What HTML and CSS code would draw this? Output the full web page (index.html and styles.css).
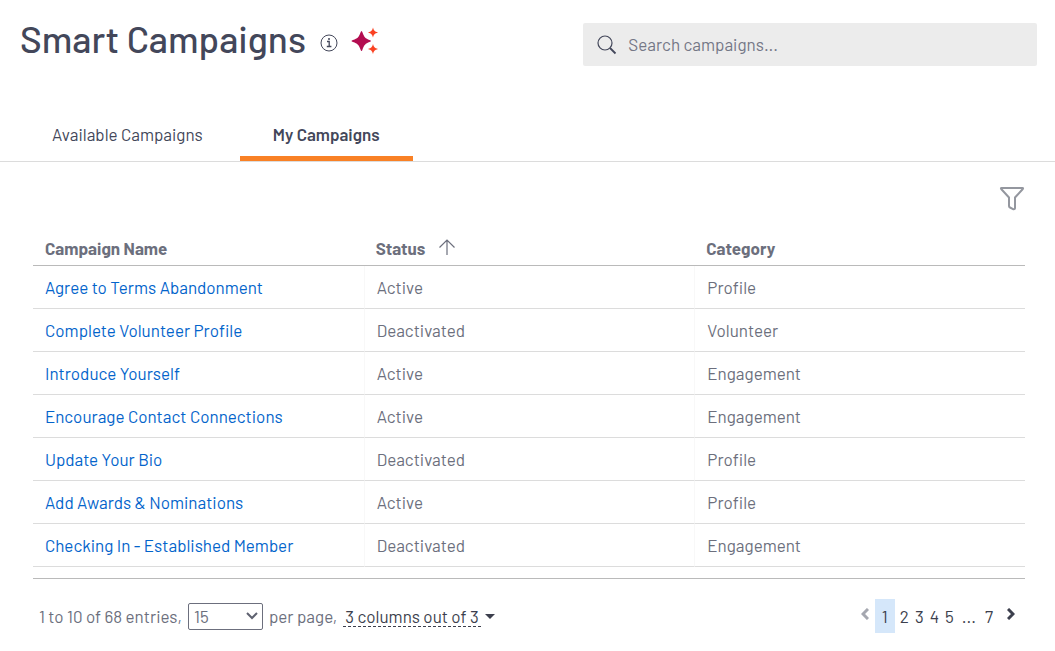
FILE: index.html
```html
<!DOCTYPE html>
<html lang="en">
<head>
  <meta charset="UTF-8">
  <title>Smart Campaigns</title>
  <link rel="stylesheet" href="styles.css">
</head>
<body>

  <header class="page-header">
    <div class="title">
      <h1>Smart Campaigns</h1>
      <button class="icon-button info" aria-label="About Smart Campaigns">
        <svg width="18" height="18" viewBox="0 0 18 18" fill="none" stroke="#43475a">
          <circle cx="9" cy="9" r="8"/>
          <path d="M7 7.5h2.2v5M6.800 12.500h4.600" stroke-width="1.3"/>
          <circle cx="9" cy="5" r="1" fill="#43475a" stroke="none"/>
        </svg>
      </button>
      <svg class="sparkle" width="28" height="28" viewBox="0 0 28 28">
        <path fill="#b30d50" d="M10.500 4Q11 4 11.500 5.500C13 10 14.500 11.500 18.500 13Q20 13.500 20 14T18.500 15C14.500 16.500 13 18 11.500 22.500Q11 24 10.500 24T9.500 22.500C8 18 6.500 16.500 2 15Q.5 14.500 .5 14T2 13C6.500 11.500 8 10 9.500 5.500Q10 4 10.500 4Z"/>
        <path fill="#fa4222" d="M22 .5C22.800 3.500 23.500 4.300 27 5.500C23.500 6.700 22.800 7.500 22 10.500C21.200 7.500 20.500 6.700 17 5.500C20.500 4.300 21.200 3.500 22 .5ZM22 17C22.800 20 23.500 20.800 27 22C23.500 23.200 22.800 24 22 27C21.200 24 20.500 23.200 17 22C20.500 20.800 21.200 20 22 17Z"/>
      </svg>
    </div>
    <form class="search" role="search">
      <svg width="20" height="20" viewBox="0 0 20 20" fill="none" stroke="#43475a" stroke-width="1.2">
        <circle cx="8" cy="8" r="7"/>
        <path d="M13 13l5.500 5.500" stroke-width="1.800"/>
      </svg>
      <input type="text" aria-label="Search campaigns" placeholder="Search campaigns...">
    </form>
  </header>

  <nav class="tabs">
    <a href="#available">Available Campaigns</a>
    <a href="#mine" class="active">My Campaigns</a>
  </nav>

  <main class="content">
    <div class="toolbar">
      <button class="icon-button" aria-label="Filter">
        <svg width="26" height="26" viewBox="0 0 26 26" fill="none" stroke="#94979f" stroke-width="2" stroke-linejoin="round">
          <path d="M2.500 2h21q1 0 .3 1L16 11.500v10.500q0 1.500-1.500 1.300L11 21.500q-1-.5-1-1.500v-8.500L2.200 3q-.7-1 .3-1z"/>
        </svg>
      </button>
    </div>

    <table class="campaigns">
      <thead>
        <tr>
          <th>Campaign Name</th>
          <th aria-sort="ascending">Status
            <svg class="sort" width="16" height="16" viewBox="0 0 16 16" fill="none" stroke="#6c6f7d" stroke-width="1.2">
              <path d="M8 16V1M.5 8.500L8 1l7.500 7.500"/>
            </svg>
          </th>
          <th>Category</th>
        </tr>
      </thead>
      <tbody>
        <tr><td><a href="#">Agree to Terms Abandonment</a></td><td>Active</td><td>Profile</td></tr>
        <tr><td><a href="#">Complete Volunteer Profile</a></td><td>Deactivated</td><td>Volunteer</td></tr>
        <tr><td><a href="#">Introduce Yourself</a></td><td>Active</td><td>Engagement</td></tr>
        <tr><td><a href="#">Encourage Contact Connections</a></td><td>Active</td><td>Engagement</td></tr>
        <tr><td><a href="#">Update Your Bio</a></td><td>Deactivated</td><td>Profile</td></tr>
        <tr><td><a href="#">Add Awards &amp; Nominations</a></td><td>Active</td><td>Profile</td></tr>
        <tr><td><a href="#">Checking In - Established Member</a></td><td>Deactivated</td><td>Engagement</td></tr>
      </tbody>
    </table>

    <!-- Paging -->
    <footer class="table-footer">
      <div class="entries">
        <span>1 to 10 of 68 entries,</span>
        <span class="select">
          <select id="perPage">
            <option>15</option>
            <option>25</option>
            <option>50</option>
          </select>
          <svg width="12" height="8" viewBox="0 0 12 8" fill="none" stroke="#5f6270" stroke-width="2">
            <path d="M1 1l5 5 5-5"/>
          </svg>
        </span>
        <label for="perPage">per page,</label>
        <button class="columns"><span>3 columns out of 3</span></button>
      </div>
      <nav class="pages" aria-label="Pages">
        <button class="arrow" aria-label="Previous page" disabled>
          <svg width="8" height="12" viewBox="0 0 8 12" fill="none" stroke="#a5a7b0" stroke-width="3"><path d="M7 1L2 6l5 5"/></svg>
        </button>
        <a href="#" class="current" aria-current="page">1</a>
        <a href="#">2</a>
        <a href="#">3</a>
        <a href="#">4</a>
        <a href="#">5</a>
        <span class="more">...</span>
        <a href="#">7</a>
        <button class="arrow next" aria-label="Next page">
          <svg width="8" height="12" viewBox="0 0 8 12" fill="none" stroke="#3c3f4d" stroke-width="3"><path d="M1 1l5 5-5 5"/></svg>
        </button>
      </nav>
    </footer>
  </main>

</body>
</html>
```
FILE: styles.css
```css
* {
  box-sizing: border-box;
}

body {
  margin: 0;
  background: #fff;
  color: #6c6f7d;
  font-family: Barlow, Roboto, sans-serif;
  font-size: 17px;
  line-height: 20px;
}

a {
  color: inherit;
  text-decoration: none;
}

button, input, select {
  font: inherit;
  color: inherit;
}

button {
  padding: 0;
  border: 0;
  background: none;
  cursor: pointer;
}

svg {
  display: block;
  flex: none;
}

.page-header {
  display: flex;
  justify-content: space-between;
  align-items: flex-start;
  padding: 14px 18px 0 20px;
}

.title {
  display: flex;
  align-items: center;
}

h1 {
  margin: 0;
  color: #43475a;
  font-size: 37px;
  font-weight: 500;
  line-height: 48px;
}

.info {
  margin: 10px 13px 0 14px;
}

.sparkle {
  margin-top: 6px;
}

.search {
  display: flex;
  align-items: center;
  gap: 11px;
  width: 43vw;
  height: 43px;
  margin-top: 9px;
  padding: 0 14px;
  border-radius: 2px;
  background: #ececec;
}

.search input {
  flex: 1;
  min-width: 0;
  padding: 0 0 1px;
  border: 0;
  outline: 0;
  background: none;
}

.search input::placeholder {
  color: #747786;
  opacity: 1;
}

.tabs {
  display: flex;
  gap: 4px;
  margin-top: 42px;
  padding-left: 19px;
  border-bottom: 1px solid #dcdcdc;
  color: #43475a;
}

.tabs a {
  padding: 16px 33px 12px;
  border-bottom: 5px solid transparent;
}

.tabs a.active {
  border-bottom-color: #f98125;
  font-weight: 600;
}

.content {
  padding: 0 30px 0 33px;
}

.toolbar {
  display: flex;
  justify-content: flex-end;
  padding-top: 24px;
}

.campaigns {
  width: 100%;
  margin-top: 20px;
  padding-bottom: 11px;
  border-bottom: 1px solid #bababa;
  border-spacing: 0;
  table-layout: fixed;
}

.campaigns th {
  height: 34px;
  padding: 0 12px 2px;
  border-bottom: 1px solid #bababa;
  font-weight: 700;
  text-align: left;
}

.campaigns td {
  height: 43px;
  padding: 0 12px;
  border-bottom: 1px solid #dcdcdc;
}

.campaigns td + td {
  border-left: 1px solid #f8f8f8;
}

.campaigns td a {
  color: #0364cb;
}

.sort {
  display: inline-block;
  margin-left: 10px;
}

.table-footer {
  display: flex;
  justify-content: space-between;
  align-items: center;
  padding: 20px 9px 0 6px;
}

.entries {
  display: flex;
  align-items: center;
  gap: 6px;
}

.select {
  display: grid;
  align-items: center;
}

.select select, .select svg {
  grid-area: 1 / 1;
}

.select select {
  width: 75px;
  height: 27px;
  padding: 0 5px;
  border: 1px solid #6c6f7d;
  border-radius: 2px;
  background: none;
  appearance: none;
}

.select svg {
  justify-self: end;
  margin-right: 5px;
  pointer-events: none;
}

.columns {
  display: flex;
  align-items: center;
  gap: 4px;
  color: #3c3f4d;
}

.columns span {
  padding: 0 2px;
  border-bottom: 1px dashed #3c3f4d;
}

/* caret */
.columns::after {
  content: "";
  border: 5px solid transparent;
  border-top-color: #3c3f4d;
  border-bottom: 0;
}

.pages {
  display: flex;
  align-items: center;
  gap: 6px;
  color: #3c3f4d;
}

.pages .current {
  margin: 0 -1px;
  padding: 7px;
  background: #d5e7fa;
}

.pages .more {
  margin: 0 3px 0 2px;
}

.arrow {
  padding: 0 1px 4px;
}

.arrow.next {
  padding-left: 8px;
}
```
